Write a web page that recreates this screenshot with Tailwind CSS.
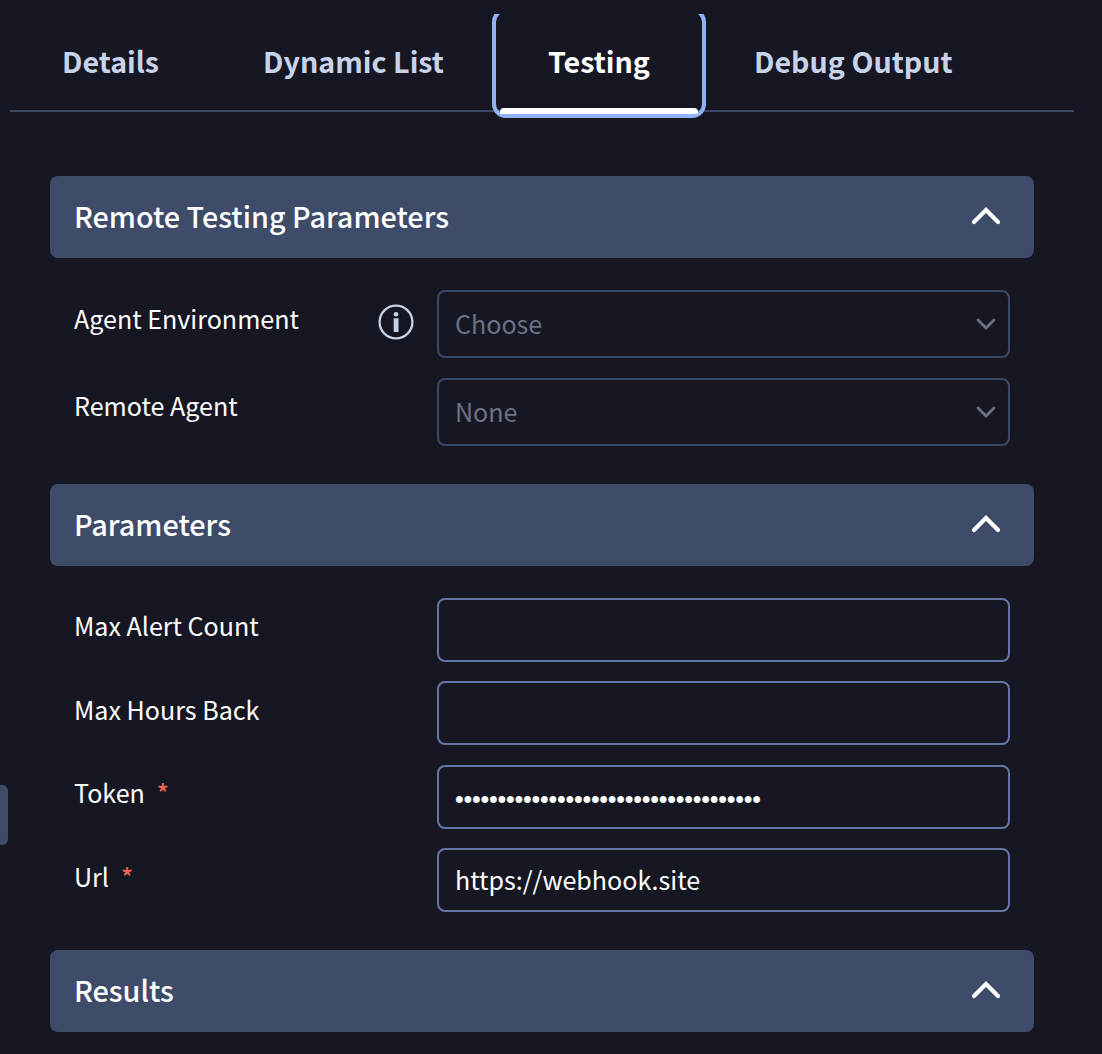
<!DOCTYPE html>
<html lang="en">
<head>
<meta charset="utf-8">
<title>Testing</title>
<script src="https://cdn.jsdelivr.net/npm/@tailwindcss/browser@4"></script>
</head>
<body class="relative h-[1054px] overflow-hidden bg-[#171723] pt-3.5 font-['Noto_Sans_CJK_SC','Noto_Sans',sans-serif] text-[25.07px] leading-9 text-white">
<svg class="hidden">
  <symbol id="up" viewBox="0 0 30 18"><path d="M3 15 15 3l12 12" fill="none" stroke="currentColor" stroke-width="4.2" stroke-linecap="round" stroke-linejoin="miter"/></symbol>
  <symbol id="down" viewBox="0 0 20 12"><path d="M2 2l8 8 8-8" fill="none" stroke="currentColor" stroke-width="2.8" stroke-linecap="round" stroke-linejoin="miter"/></symbol>
</svg>

<div class="absolute top-[785px] left-0 h-[60px] w-2 rounded-r-md bg-[#3e4b69]"></div>

<!-- Tabs -->
<nav class="h-[105px] w-[1074px] overflow-hidden pl-2.5">
  <div class="flex h-[98px] border-b-2 border-[#3c4865] text-[28.65px] font-bold text-[#c7d3e9]">
    <button class="w-[201px] pb-0.5 pl-[52px] text-left"><span>Details</span></button>
    <button class="w-[281px] pb-0.5 pl-[52px] text-left"><span>Dynamic List</span></button>
    <button class="relative w-[214px] pb-0.5 pl-[56px] text-left text-white"><span>Testing</span>
      <i class="absolute -top-1.5 left-0 block h-[110px] w-[214px] rounded-[14px] border-4 border-[#92b4f4]"></i>
      <i class="absolute top-[94px] left-[8px] block h-1.5 w-[198px] rounded-t-[4px] bg-white"></i>
    </button>
    <button class="w-[300px] pb-0.5 pl-[48px] text-left"><span>Debug Output</span></button>
  </div>
</nav>

<main class="ml-[50px] w-[984px] pt-[57px]">
  <section>
    <h2 class="flex h-[82px] items-center justify-between rounded-lg bg-[#3e4b69] pr-[33px] pb-0.5 pl-6 text-[28.75px] font-medium"><span>Remote Testing Parameters</span><svg class="h-[18px] w-[30px]"><use href="#up"/></svg></h2>
    <div class="flex flex-col gap-5 px-6 pt-8 pb-[38px]">
      <div class="flex h-[68px]">
        <div class="flex w-[363px] justify-between pt-2.5 pr-[23px]"><span>Agent Environment</span>
          <svg class="mt-1 size-9" viewBox="0 0 36 36"><circle cx="18" cy="18" r="16.4" fill="none" stroke="#c7d3e9" stroke-width="2.3"/><circle cx="18" cy="10.2" r="2.3" fill="#c7d3e9"/><path d="M15.7 14.3h4.8V28h-4.8z" fill="#c7d3e9"/></svg>
        </div>
        <div class="flex flex-1 items-center justify-between rounded-lg border-2 border-[#3c4865] pr-3 pl-4 text-[#6c7183]"><span class="pb-0.5">Choose</span><svg class="h-3 w-5"><use href="#down"/></svg></div>
      </div>
      <div class="flex h-[68px]">
        <div class="w-[363px] pt-[9px]"><span>Remote Agent</span></div>
        <div class="flex flex-1 items-center justify-between rounded-lg border-2 border-[#3c4865] pr-3 pl-4 text-[#6c7183]"><span class="pb-0.5">None</span><svg class="h-3 w-5"><use href="#down"/></svg></div>
      </div>
    </div>
  </section>

  <section>
    <h2 class="flex h-[82px] items-center justify-between rounded-lg bg-[#3e4b69] pr-[33px] pb-0.5 pl-6 text-[28.75px] font-medium"><span>Parameters</span><svg class="h-[18px] w-[30px]"><use href="#up"/></svg></h2>
    <div class="flex flex-col gap-[19.4px] px-6 pt-8 pb-[38px]">
      <div class="flex h-16">
        <div class="w-[363px] pt-[9px]"><span>Max Alert Count</span></div>
        <div class="flex-1 rounded-lg border-2 border-[#6576a6]"></div>
      </div>
      <div class="flex h-16">
        <div class="w-[363px] pt-[10px]"><span>Max Hours Back</span></div>
        <div class="flex-1 rounded-lg border-2 border-[#6576a6]"></div>
      </div>
      <div class="flex h-16">
        <div class="flex w-[363px] pt-[9px]"><span>Token</span><span class="ml-3 text-[25px] font-medium text-[#ee6352]">*</span></div>
        <div class="flex flex-1 items-center rounded-lg border-2 border-[#6576a6] pt-[5px] pl-4 font-['Liberation_Sans',sans-serif] text-[25px] tracking-[-0.26px]"><span>••••••••••••••••••••••••••••••••••••</span></div>
      </div>
      <div class="flex h-16">
        <div class="flex w-[363px] pt-[10px]"><span>Url</span><span class="ml-3 text-[25px] font-medium text-[#ee6352]">*</span></div>
        <div class="flex flex-1 items-center rounded-lg border-2 border-[#6576a6] pb-0.5 pl-4"><span>https://webhook.site</span></div>
      </div>
    </div>
  </section>

  <h2 class="flex h-[82px] items-center justify-between rounded-lg bg-[#3e4b69] pr-[33px] pb-0.5 pl-6 text-[28.75px] font-medium"><span>Results</span><svg class="h-[18px] w-[30px]"><use href="#up"/></svg></h2>
</main>
</body>
</html>
